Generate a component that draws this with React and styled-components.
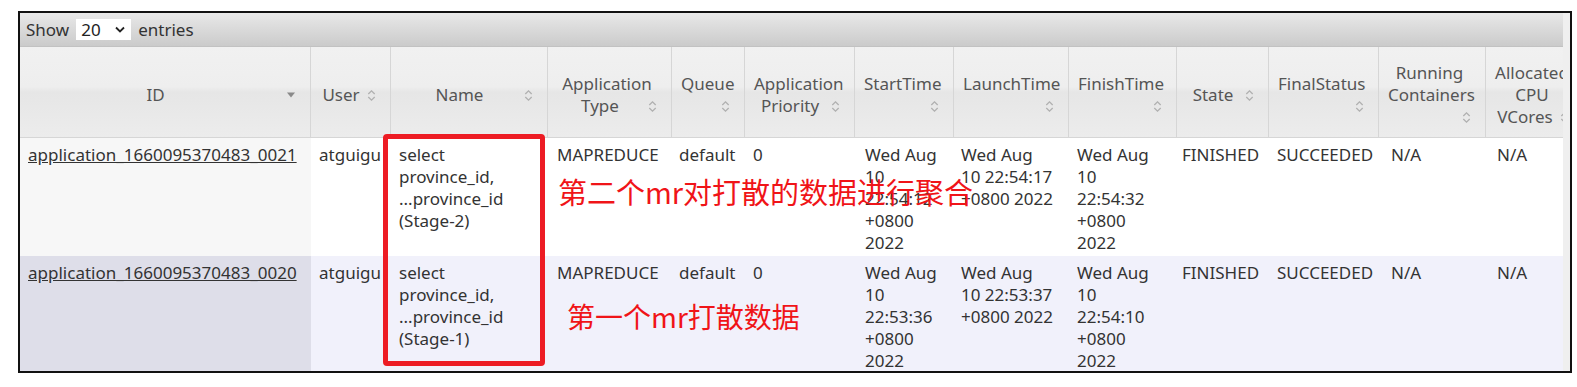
import React from "react";
import styled, { createGlobalStyle } from "styled-components";

const GlobalStyle = createGlobalStyle`
  body {
    margin: 0;
    background: #fff;
    font-family: "Noto Sans", "Noto Sans CJK SC", sans-serif;
  }
`;

const Frame = styled.div`
  position: relative;
  box-sizing: border-box;
  width: 1554px;
  height: 362px;
  margin: 11px 0 0 18px;
  border: 2px solid #111;
  background: #efefef;
  overflow: hidden;
`;

const Inner = styled.div`
  width: 1543px;
  height: 100%;
  overflow: hidden;
  background: #fff;
`;

const Toolbar = styled.div`
  display: flex;
  align-items: center;
  gap: 7px;
  height: 33px;
  padding-left: 6px;
  background: linear-gradient(#e8e8e8, #cbcbcb);
  border-bottom: 1px solid #c2c2c2;
  font-size: 17px;
  color: #333;
`;

const SelectBox = styled.div`
  display: flex;
  align-items: center;
  justify-content: space-between;
  box-sizing: border-box;
  width: 55px;
  height: 21px;
  padding: 0 6px 0 5px;
  background: #fff;
  color: #222;
`;

const Table = styled.table`
  table-layout: fixed;
  border-collapse: separate;
  border-spacing: 0;
  width: 1564px;
  font-size: 17px;
  line-height: 22px;
  color: #333;
`;

const Th = styled.th`
  box-sizing: border-box;
  height: 91px;
  padding: 8px 14px 2px 9px;
  background: linear-gradient(#f1f1f1 0%, #eeeeee 44%, #e6e6e6 50%, #ececec 100%);
  border-right: 1px solid #d6d6d6;
  border-bottom: 1px solid #d6d6d6;
  font-weight: normal;
  color: #555;
  vertical-align: middle;
  overflow: hidden;
`;

const HeadLine = styled.div`
  display: flex;
  align-items: center;
  white-space: nowrap;
`;

const HeadText = styled.span`
  flex: 1;
  text-align: center;
`;

const IconSlot = styled.span`
  display: flex;
  align-items: center;
  justify-content: flex-end;
  width: 14px;
  height: 22px;
`;

const Td = styled.td`
  padding: 6px 4px 2px ${(p) => p.$pl}px;
  vertical-align: top;
  white-space: nowrap;
  overflow: hidden;
  background: ${(p) => p.$bg};
`;

const Line = styled.div``;

const AppLink = styled.a`
  color: #333;
  text-decoration: underline;
`;

const Highlight = styled.div`
  position: absolute;
  left: 363px;
  top: 121px;
  width: 162px;
  height: 232px;
  box-sizing: border-box;
  border: 5px solid #ed1c24;
  border-radius: 4px;
`;

const Note = styled.div`
  position: absolute;
  left: ${(p) => p.$x}px;
  top: ${(p) => p.$y}px;
  font-family: "Noto Sans CJK SC", sans-serif;
  font-size: ${(p) => p.$size}px;
  line-height: 1;
  color: #f01418;
  white-space: nowrap;
`;

function SortIcon({ sorted }) {
  if (sorted) {
    return (
      <svg width="10" height="6" viewBox="0 0 10 6">
        <path d="M1 0.5h8L5 5.5z" fill="#8a8a8a" />
      </svg>
    );
  }
  return (
    <svg width="9" height="13" viewBox="0 0 9 13">
      <path
        d="M1.3 5L4.5 1.8 7.7 5M1.3 8L4.5 11.2 7.7 8"
        fill="none"
        stroke="#b0b0b0"
        strokeWidth="1.3"
      />
    </svg>
  );
}

const columns = [
  { w: 291, pl: 8, lines: ["ID"], sorted: true },
  { w: 80, pl: 8, lines: ["User"] },
  { w: 157, pl: 8, lines: ["Name"] },
  { w: 124, pl: 9, lines: ["Application", "Type"] },
  { w: 73, pl: 7, lines: ["Queue", ""] },
  { w: 110, pl: 8, lines: ["Application", "Priority"] },
  { w: 99, pl: 10, lines: ["StartTime", ""] },
  { w: 115, pl: 7, lines: ["LaunchTime", ""] },
  { w: 108, pl: 8, lines: ["FinishTime", ""] },
  { w: 92, pl: 5, lines: ["State"] },
  { w: 110, pl: 8, lines: ["FinalStatus", ""] },
  { w: 107, pl: 12, lines: ["Running", "Containers", ""] },
  { w: 98, pl: 11, lines: ["Allocated", "CPU", "VCores"] },
];

const rows = [
  [
    ["application_1660095370483_0021"],
    ["atguigu"],
    ["select", "province_id,", "...province_id", "(Stage-2)"],
    ["MAPREDUCE"],
    ["default"],
    ["0"],
    ["Wed Aug", "10", "22:54:12", "+0800", "2022"],
    ["Wed Aug", "10 22:54:17", "+0800 2022"],
    ["Wed Aug", "10", "22:54:32", "+0800", "2022"],
    ["FINISHED"],
    ["SUCCEEDED"],
    ["N/A"],
    ["N/A"],
  ],
  [
    ["application_1660095370483_0020"],
    ["atguigu"],
    ["select", "province_id,", "...province_id", "(Stage-1)"],
    ["MAPREDUCE"],
    ["default"],
    ["0"],
    ["Wed Aug", "10", "22:53:36", "+0800", "2022"],
    ["Wed Aug", "10 22:53:37", "+0800 2022"],
    ["Wed Aug", "10", "22:54:10", "+0800", "2022"],
    ["FINISHED"],
    ["SUCCEEDED"],
    ["N/A"],
    ["N/A"],
  ],
];

const rowColors = [
  { base: "#ffffff", sorted: "#f7f7f7" },
  { base: "#f1f1fb", sorted: "#dedee9" },
];

export default function App() {
  return (
    <>
      <GlobalStyle />
      <Frame>
        <Inner>
          <Toolbar>
            <span>Show</span>
            <SelectBox>
              <span>20</span>
              <svg width="10" height="7" viewBox="0 0 10 7">
                <path d="M1 1.5l4 4 4-4" fill="none" stroke="#222" strokeWidth="1.8" />
              </svg>
            </SelectBox>
            <span>entries</span>
          </Toolbar>
          <Table>
            <colgroup>
              {columns.map((c, i) => (
                <col key={i} style={{ width: c.w }} />
              ))}
            </colgroup>
            <thead>
              <tr>
                {columns.map((c, i) => (
                  <Th key={i}>
                    {c.lines.map((l, j) => {
                      const last = j === c.lines.length - 1;
                      return (
                        <HeadLine key={j}>
                          <HeadText>{l}</HeadText>
                          {last && (
                            <IconSlot>
                              <SortIcon sorted={c.sorted} />
                            </IconSlot>
                          )}
                        </HeadLine>
                      );
                    })}
                  </Th>
                ))}
              </tr>
            </thead>
            <tbody>
              {rows.map((r, ri) => (
                <tr key={ri}>
                  {r.map((cell, ci) => (
                    <Td
                      key={ci}
                      $pl={columns[ci].pl}
                      $bg={ci === 0 ? rowColors[ri].sorted : rowColors[ri].base}
                    >
                      {cell.map((l, li) => (
                        <Line key={li}>
                          {ci === 0 ? <AppLink href="#">{l}</AppLink> : l}
                        </Line>
                      ))}
                    </Td>
                  ))}
                </tr>
              ))}
            </tbody>
          </Table>
        </Inner>
        <Highlight />
        <Note $x={538} $y={164} $size={29}>第二个mr对打散的数据进行聚合</Note>
        <Note $x={547} $y={289} $size={28}>第一个mr打散数据</Note>
      </Frame>
    </>
  );
}
